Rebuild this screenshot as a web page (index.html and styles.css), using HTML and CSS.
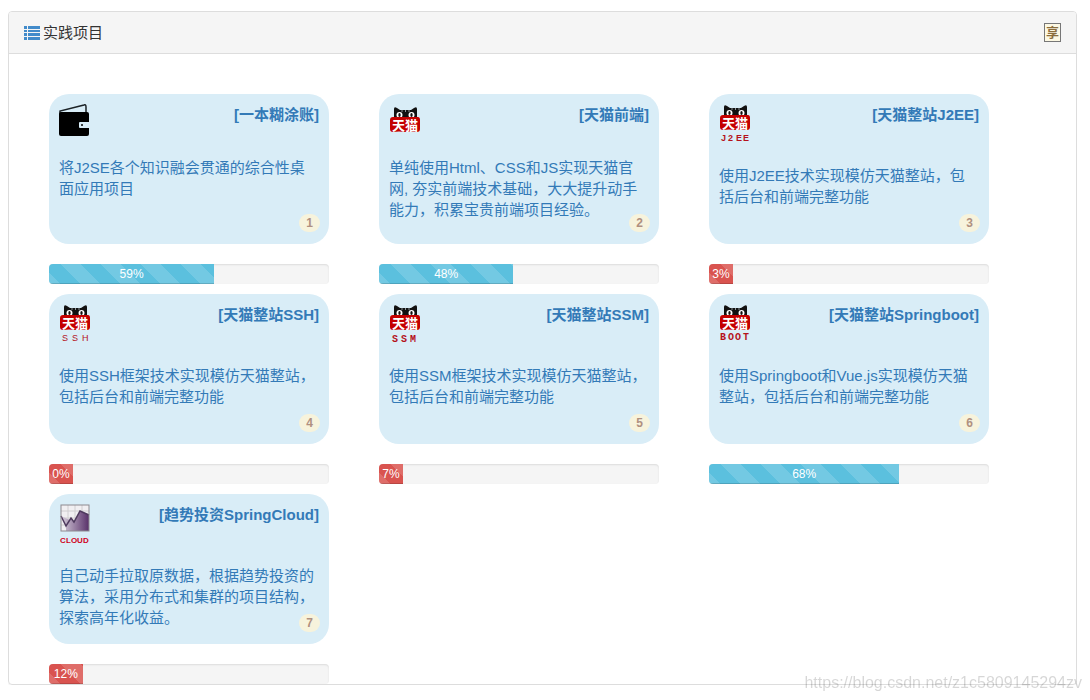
FILE: index.html
```html
<!DOCTYPE html>
<html lang="zh-CN">
<head>
<meta charset="utf-8">
<meta name="viewport" content="width=device-width, initial-scale=1">
<title>实践项目</title>
<link rel="stylesheet" href="styles.css">
</head>
<body>
<svg class="defs" width="0" height="0" aria-hidden="true">
  <defs>
    <g id="tmall">
      <path d="M5 14V5Q5 2 8 4L11 6H22L25 4Q28 2 28 5V14Z" fill="#111"/>
      <path d="M13 8V6M16.500 8V6M20 8V6" stroke="#aab4b8" stroke-width=".8"/>
      <ellipse cx="10.500" cy="11" rx="3" ry="3" fill="#fff"/>
      <ellipse cx="22.500" cy="11" rx="3" ry="3" fill="#fff"/>
      <ellipse cx="10.500" cy="11" rx="1.200" ry="2" fill="#111"/>
      <ellipse cx="22.500" cy="11" rx="1.200" ry="2" fill="#111"/>
      <path d="M4 13H29Q31 13 31 16V25Q31 28 28 28Q22 27 16 28Q10 27 4 28Q1 28 1 25V16Q1 13 4 13Z" fill="#c40000"/>
      <text x="16" y="26" class="tmall-text">天猫</text>
    </g>
  </defs>
</svg>
<main class="panel">
  <header class="panel-heading">
    <h1 class="panel-title">
      <svg class="list-icon" width="16" height="14" viewBox="0 0 16 14" aria-hidden="true"><path d="M0 0h3v3H0zM4 0h12v3H4zM0 4h3v2H0zM4 4h12v2H4zM0 7h3v3H0zM4 7h12v3H4zM0 11h3v3H0zM4 11h12v3H4z"/></svg>
      <span>实践项目</span>
    </h1>
    <button class="share" type="button">享</button>
  </header>
  <div class="projects">
    <section class="project">
      <a class="card" href="#p1">
        <span class="card-top">
          <svg width="32" height="32" viewBox="0 0 32 32" aria-hidden="true"><path d="M1 10V7L25 1Q27 0 27 3V9" fill="none" stroke="#1b2226" stroke-width="1.500"/><rect x="0" y="8" width="30" height="24" rx="2"/><path d="M21 18h9v6h-9q-1 0-1-1v-4q0-1 1-1z" fill="#d9edf7"/><circle cx="23" cy="21" r="1"/></svg>
          <strong class="card-title">[一本糊涂账]</strong>
        </span>
        <span class="card-text">将J2SE各个知识融会贯通的综合性桌面应用项目</span>
        <span class="badge">1</span>
      </a>
      <div class="progress"><div class="bar info" role="progressbar" aria-label="一本糊涂账" aria-valuenow="59" style="width:59%">59%</div></div>
    </section>
    <section class="project">
      <a class="card" href="#p2">
        <span class="card-top">
          <svg width="32" height="32" viewBox="0 0 32 32" aria-hidden="true"><use href="#tmall"/></svg>
          <strong class="card-title">[天猫前端]</strong>
        </span>
        <span class="card-text">单纯使用Html、CSS和JS实现天猫官网, 夯实前端技术基础，大大提升动手能力，积累宝贵前端项目经验。</span>
        <span class="badge">2</span>
      </a>
      <div class="progress"><div class="bar info" role="progressbar" aria-label="天猫前端" aria-valuenow="48" style="width:48%">48%</div></div>
    </section>
    <section class="project">
      <a class="card" href="#p3">
        <span class="card-top">
          <svg width="32" height="40" viewBox="0 0 32 40" aria-hidden="true"><use href="#tmall" y="-2"/><text class="tag" y="37" x="2 9 17 24">J2EE</text></svg>
          <strong class="card-title">[天猫整站J2EE]</strong>
        </span>
        <span class="card-text">使用J2EE技术实现模仿天猫整站，包括后台和前端完整功能</span>
        <span class="badge">3</span>
      </a>
      <div class="progress"><div class="bar danger" role="progressbar" aria-label="天猫整站J2EE" aria-valuenow="3" style="width:3%">3%</div></div>
    </section>
    <section class="project">
      <a class="card" href="#p4">
        <span class="card-top">
          <svg width="32" height="40" viewBox="0 0 32 40" aria-hidden="true"><use href="#tmall" y="-2"/><text class="tag light" y="37" x="3 13 23">SSH</text></svg>
          <strong class="card-title">[天猫整站SSH]</strong>
        </span>
        <span class="card-text">使用SSH框架技术实现模仿天猫整站，包括后台和前端完整功能</span>
        <span class="badge">4</span>
      </a>
      <div class="progress"><div class="bar danger" role="progressbar" aria-label="天猫整站SSH" aria-valuenow="0" style="width:0%">0%</div></div>
    </section>
    <section class="project">
      <a class="card" href="#p5">
        <span class="card-top">
          <svg width="32" height="40" viewBox="0 0 32 40" aria-hidden="true"><use href="#tmall" y="-2"/><text class="tag mono" y="38" x="3 12 21">SSM</text></svg>
          <strong class="card-title">[天猫整站SSM]</strong>
        </span>
        <span class="card-text">使用SSM框架技术实现模仿天猫整站，包括后台和前端完整功能</span>
        <span class="badge">5</span>
      </a>
      <div class="progress"><div class="bar danger" role="progressbar" aria-label="天猫整站SSM" aria-valuenow="7" style="width:7%">7%</div></div>
    </section>
    <section class="project">
      <a class="card" href="#p6">
        <span class="card-top">
          <svg width="32" height="40" viewBox="0 0 32 40" aria-hidden="true"><use href="#tmall" y="-2"/><text class="tag mono" y="36" x="1 9 16 24">BOOT</text></svg>
          <strong class="card-title">[天猫整站Springboot]</strong>
        </span>
        <span class="card-text">使用Springboot和Vue.js实现模仿天猫整站，包括后台和前端完整功能</span>
        <span class="badge">6</span>
      </a>
      <div class="progress"><div class="bar info" role="progressbar" aria-label="天猫整站Springboot" aria-valuenow="68" style="width:68%">68%</div></div>
    </section>
    <section class="project">
      <a class="card" href="#p7">
        <span class="card-top">
          <svg width="32" height="40" viewBox="0 0 32 40" aria-hidden="true">
            <defs><linearGradient id="area"><stop offset="0" stop-color="#d8cfdd"/><stop offset="1" stop-color="#583069"/></linearGradient></defs>
            <rect x="2" y="1" width="28" height="26" fill="#f1eff2"/>
            <path d="M9 1v26M16 1v26M23 1v26M2 7h28M2 14h28M2 21h28" stroke="#d0ced1"/>
            <path d="M2 12 7 22 12 14 15 18 21 7 30 11V27H7V22L12 14 15 18Z" fill="url(#area)"/>
            <path d="M2 12 7 22 12 14 15 18 21 7 30 11" fill="none" stroke="#4f3a5e" stroke-width="1.500"/>
            <rect x="2" y="1" width="28" height="26" fill="none" stroke="#8d8a90"/>
            <text class="tag small" y="39" x="1 7 12 18 24">CLOUD</text>
          </svg>
          <strong class="card-title">[趋势投资SpringCloud]</strong>
        </span>
        <span class="card-text">自己动手拉取原数据，根据趋势投资的算法，采用分布式和集群的项目结构，探索高年化收益。</span>
        <span class="badge">7</span>
      </a>
      <div class="progress"><div class="bar danger" role="progressbar" aria-label="趋势投资SpringCloud" aria-valuenow="12" style="width:12%">12%</div></div>
    </section>
  </div>
</main>
<div class="watermark">https://blog.csdn.net/z1c5809145294zv</div>
</body>
</html>
```
FILE: styles.css
```css
* { box-sizing: border-box; }

body {
  margin: 11px 13px 0 8px;
  background: #fff;
  color: #333;
  font-family: "Liberation Sans", "Noto Sans CJK SC", sans-serif;
  font-size: 15px;
  line-height: 21px;
}

.defs { position: absolute; }

.panel {
  border: 1px solid #ddd;
  border-radius: 4px;
  box-shadow: 0 1px 1px rgba(0, 0, 0, .05);
}

.panel-heading {
  display: flex;
  align-items: center;
  justify-content: space-between;
  height: 42px;
  padding: 0 15px;
  background: #f5f5f5;
  border-bottom: 1px solid #ddd;
  border-radius: 3px 3px 0 0;
}

.panel-title {
  display: flex;
  align-items: center;
  gap: 3px;
  margin: 0;
  font-size: 15px;
  font-weight: 400;
}

.list-icon { fill: #428bca; }

.share {
  width: 17px;
  height: 19px;
  padding: 0;
  border: 1px solid #777;
  background: #fcf8e3;
  color: #8a6d3b;
  font: 700 13px/17px "Liberation Sans", "Noto Sans CJK SC", sans-serif;
}

.projects {
  display: grid;
  grid-template-columns: repeat(auto-fill, 280px);
  gap: 10px 50px;
  padding: 40px 40px 0;
}

.card {
  position: relative;
  display: block;
  min-height: 150px;
  margin-bottom: 20px;
  padding: 10px;
  border-radius: 20px;
  background: #d9edf7;
  color: #337ab7;
  text-decoration: none;
}

.card-top {
  display: flex;
  align-items: flex-start;
  justify-content: space-between;
  margin-bottom: 21px;
}

.card-title { font-weight: 700; }

.card-text { display: block; }

.badge {
  position: absolute;
  right: 9px;
  bottom: 12px;
  min-width: 21px;
  padding: 3px 7px;
  border-radius: 10px;
  background: #f7f3dc;
  color: #b09080;
  font-size: 12px;
  font-weight: 700;
  line-height: 12px;
  text-align: center;
}

.progress {
  height: 20px;
  overflow: hidden;
  border-radius: 4px;
  background: #f5f5f5;
  box-shadow: inset 0 1px 2px rgba(0, 0, 0, .1);
}

.bar {
  min-width: 24px;
  height: 100%;
  background-image: linear-gradient(45deg, rgba(255, 255, 255, .15) 25%, transparent 25%, transparent 50%, rgba(255, 255, 255, .15) 50%, rgba(255, 255, 255, .15) 75%, transparent 75%);
  background-position: 12px 0;
  background-size: 40px 40px;
  box-shadow: inset 0 -1px 0 rgba(0, 0, 0, .15);
  color: #fff;
  font-size: 12px;
  line-height: 20px;
  text-align: center;
}

.info { background-color: #5bc0de; }
.danger { background-color: #d9534f; }

.tmall-text {
  fill: #fff;
  font-size: 13px;
  font-weight: 700;
  text-anchor: middle;
}

.tag {
  fill: #b5121b;
  font-size: 9px;
  font-weight: 700;
}

.light { font-weight: 400; }
.mono { font-family: "Liberation Mono", monospace; font-size: 10px; }
.small { fill: #d0021b; font-size: 8px; }

.watermark {
  position: fixed;
  right: 8px;
  bottom: 7px;
  z-index: 1;
  color: rgba(0, 0, 0, .16);
  font-size: 16px;
}
```
